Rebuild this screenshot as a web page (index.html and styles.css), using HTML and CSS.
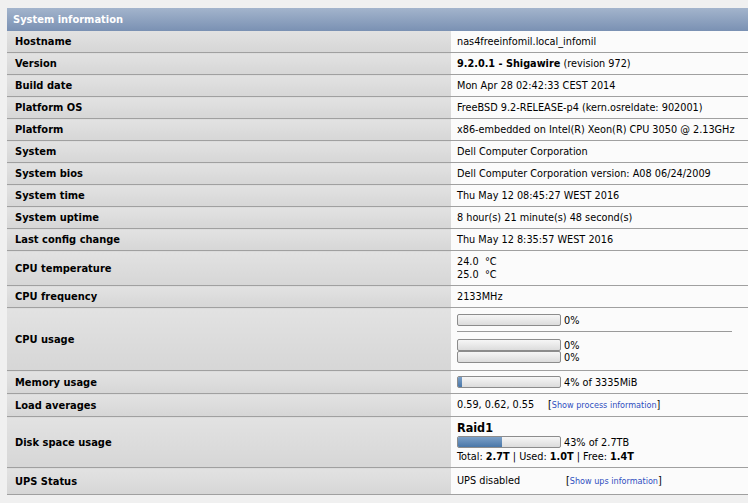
FILE: index.html
```html
<!DOCTYPE html>
<html>
<head>
<meta charset="utf-8">
<link rel="stylesheet" href="styles.css">
</head>
<body>
<table class="info">
  <tr><th class="title" colspan="2">System information</th></tr>
  <tr><td class="label">Hostname</td><td class="value">nas4freeinfomil.local_infomil</td></tr>
  <tr><td class="label">Version</td><td class="value"><b>9.2.0.1 - Shigawire</b> (revision 972)</td></tr>
  <tr><td class="label">Build date</td><td class="value">Mon Apr 28 02:42:33 CEST 2014</td></tr>
  <tr><td class="label">Platform OS</td><td class="value">FreeBSD 9.2-RELEASE-p4 (kern.osreldate: 902001)</td></tr>
  <tr><td class="label">Platform</td><td class="value">x86-embedded on Intel(R) Xeon(R) CPU 3050 @ 2.13GHz</td></tr>
  <tr><td class="label">System</td><td class="value">Dell Computer Corporation</td></tr>
  <tr><td class="label">System bios</td><td class="value">Dell Computer Corporation version: A08 06/24/2009</td></tr>
  <tr><td class="label">System time</td><td class="value">Thu May 12 08:45:27 WEST 2016</td></tr>
  <tr><td class="label">System uptime</td><td class="value">8 hour(s) 21 minute(s) 48 second(s)</td></tr>
  <tr><td class="label">Last config change</td><td class="value">Thu May 12 8:35:57 WEST 2016</td></tr>
  <tr><td class="label">CPU temperature</td><td class="value"><div class="temp"><span class="tnum">24.0</span>°C</div><div class="temp"><span class="tnum">25.0</span>°C</div></td></tr>
  <tr><td class="label">CPU frequency</td><td class="value">2133MHz</td></tr>
  <tr><td class="label">CPU usage</td><td class="value cpu">
    <div class="barline"><span class="bar"><span class="fill" style="width:0%"></span></span>0%</div>
    <div class="sep"></div>
    <div class="barline"><span class="bar"><span class="fill" style="width:0%"></span></span>0%</div>
    <div class="barline"><span class="bar"><span class="fill" style="width:0%"></span></span>0%</div>
  </td></tr>
  <tr><td class="label">Memory usage</td><td class="value mem"><div class="barline"><span class="bar"><span class="fill" style="width:4%"></span></span>4% of 3335MiB</div></td></tr>
  <tr><td class="label">Load averages</td><td class="value tall"><span class="lead load">0.59, 0.62, 0.55</span>[<a class="link" href="#">Show process information</a>]</td></tr>
  <tr><td class="label">Disk space usage</td><td class="value disk">
    <div class="diskname">Raid1</div>
    <div class="barline"><span class="bar"><span class="fill" style="width:43%"></span></span>43% of 2.7TB</div>
    <div>Total: <b>2.7T</b> | Used: <b>1.0T</b> | Free: <b>1.4T</b></div>
  </td></tr>
  <tr><td class="label">UPS Status</td><td class="value upsrow"><span class="lead ups">UPS disabled</span>[<a class="link" href="#">Show ups information</a>]</td></tr>
</table>
</body>
</html>
```

FILE: styles.css
```css
html, body {
  margin: 0;
  padding: 0;
  overflow: hidden;
  background: #f0f0f0;
}
body {
  padding: 8px 0 0 7px;
  font-family: "DejaVu Sans Condensed", "DejaVu Sans", sans-serif;
  font-size: 11px;
  color: #000;
}
.info {
  border-collapse: collapse;
  width: 100%;
}
.title {
  height: 23px;
  padding: 0 6px;
  text-align: left;
  color: #fff;
  font-weight: bold;
  font-size: 11px;
  background: linear-gradient(#a3b4cc, #7a91b3);
}
.info td {
  border-bottom: 1px solid #a0a0a0;
  padding: 4px 6px 4px 6px;
  line-height: 13px;
  vertical-align: middle;
}
.label {
  width: 430px;
  padding-left: 8px !important;
  font-weight: bold;
  background: linear-gradient(#e2e2e2, #d6d6d6);
}
.value {
  background: #fbfbfb;
  font-size: 10.8px;
}
.tnum {
  display: inline-block;
  width: 28px;
}
.info td.cpu {
  padding-top: 6px;
  padding-bottom: 7px;
}
.info td.mem {
  padding-top: 5px;
  padding-bottom: 5px;
}
.info td.tall {
  line-height: 14px;
}
.info td.upsrow {
  padding-top: 6px;
  padding-bottom: 6px;
}
.barline {
  display: flex;
  align-items: center;
  height: 12px;
  gap: 3px;
}
.sep {
  height: 1px;
  background: #9a9a9a;
  width: 275px;
  margin: 5px 0 7px;
}
.bar {
  display: inline-block;
  width: 102px;
  height: 10px;
  border: 1px solid #8c8c8c;
  border-radius: 2px;
  background: linear-gradient(#f6f6f6, #dcdcdc);
  overflow: hidden;
}
.fill {
  display: block;
  height: 100%;
  background: linear-gradient(#7ba0c8, #4a77a8);
}
.lead {
  display: inline-block;
}
.load { width: 91px; }
.ups { width: 109px; }
.link {
  color: #2f4fbf;
  font-size: 9px;
  text-decoration: none;
}
.diskname {
  font-weight: bold;
  font-size: 12.5px;
  line-height: 14px;
}
.disk .barline {
  margin: 1px 0 2px;
}
```
